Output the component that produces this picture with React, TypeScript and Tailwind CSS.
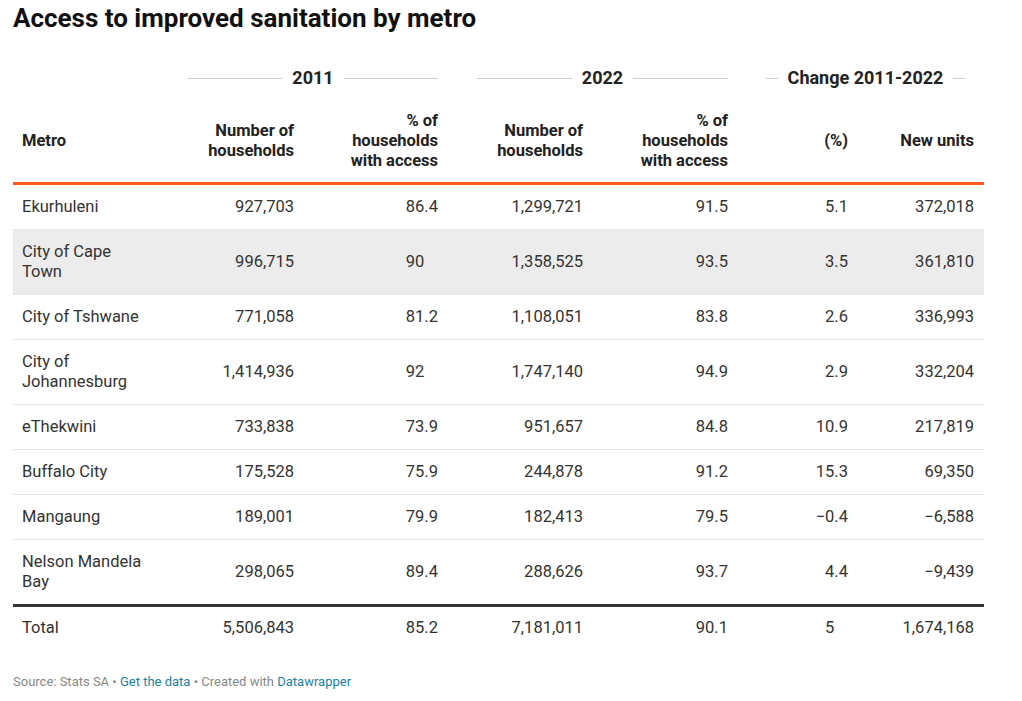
import React from "react";

type Row = { name: React.ReactNode; vals: string[]; shaded?: boolean };

const rows: Row[] = [
  { name: "Ekurhuleni", vals: ["927,703", "86.4", "1,299,721", "91.5", "5.1", "372,018"] },
  { name: <>City of Cape<br />Town</>, vals: ["996,715", "90", "1,358,525", "93.5", "3.5", "361,810"], shaded: true },
  { name: "City of Tshwane", vals: ["771,058", "81.2", "1,108,051", "83.8", "2.6", "336,993"] },
  { name: <>City of<br />Johannesburg</>, vals: ["1,414,936", "92", "1,747,140", "94.9", "2.9", "332,204"] },
  { name: "eThekwini", vals: ["733,838", "73.9", "951,657", "84.8", "10.9", "217,819"] },
  { name: "Buffalo City", vals: ["175,528", "75.9", "244,878", "91.2", "15.3", "69,350"] },
  { name: "Mangaung", vals: ["189,001", "79.9", "182,413", "79.5", "−0.4", "−6,588"] },
  { name: <>Nelson Mandela<br />Bay</>, vals: ["298,065", "89.4", "288,626", "93.7", "4.4", "−9,439"] },
];

const decimalCols = [1, 3, 4];

const grid = "grid grid-cols-[165px_126px_144px_145px_145px_120px_126px]";

function Num({ v, col }: { v: string; col: number }) {
  const pad = decimalCols.includes(col) && !v.includes(".");
  return (
    <div className="pr-[10px] text-right">
      {v}
      {pad ? <span className="invisible">.0</span> : null}
    </div>
  );
}

function GroupLabel({ label }: { label: string }) {
  return (
    <div className="flex items-center">
      <div className="h-px flex-1 bg-[#cccccc]" />
      <span className="px-[10px] text-[18px] font-bold leading-[20px] text-[#222]">{label}</span>
      <div className="h-px flex-1 bg-[#cccccc]" />
    </div>
  );
}

export default function App() {
  return (
    <div
      className="w-[1022px] h-[701px] bg-white text-[#333] overflow-hidden"
      style={{ fontFamily: "Roboto, 'Liberation Sans', sans-serif" }}
    >
      <div className="ml-[13px] w-[971px]">
        <h1 className="mt-[4px] text-[26px] font-bold leading-[28px] text-[#111]">
          Access to improved sanitation by metro
        </h1>

        <div className={`${grid} mt-[36px] h-[20px]`}>
          <div />
          <div className="col-span-2 ml-[10px] mr-[10px]">
            <GroupLabel label="2011" />
          </div>
          <div className="col-span-2 ml-[29px] mr-[10px]">
            <GroupLabel label="2022" />
          </div>
          <div className="col-span-2 ml-[28px] mr-[19px]">
            <GroupLabel label="Change 2011-2022" />
          </div>
        </div>

        <div className={`${grid} mt-[12px] h-[85px] items-center border-b-[3px] border-[#f95a1e] text-[16.5px] font-bold leading-[20px] text-[#222]`}>
          <div className="pl-[9px]">Metro</div>
          <div className="pr-[10px] text-right">Number of<br />households</div>
          <div className="pr-[10px] text-right">% of<br />households<br />with access</div>
          <div className="pr-[10px] text-right">Number of<br />households</div>
          <div className="pr-[10px] text-right">% of<br />households<br />with access</div>
          <div className="pr-[10px] text-right">(%)</div>
          <div className="pr-[10px] text-right">New units</div>
        </div>

        {rows.map((r, i) => {
          const last = i === rows.length - 1;
          return (
            <div
              key={i}
              className={`${grid} items-center text-[16.5px] leading-[20px] ${r.shaded ? "bg-[#ececec]" : ""} ${last ? "" : "border-b border-[#e6e6e6]"}`}
            >
              <div className="pl-[9px] py-[12px]">{r.name}</div>
              {r.vals.map((v, j) => (
                <Num key={j} v={v} col={j} />
              ))}
            </div>
          );
        })}

        <div className={`${grid} h-[44px] items-center border-t-[3px] border-[#333] text-[16.5px] leading-[20px]`}>
          <div className="pl-[9px]">Total</div>
          {["5,506,843", "85.2", "7,181,011", "90.1", "5", "1,674,168"].map((v, j) => (
            <Num key={j} v={v} col={j} />
          ))}
        </div>

        <div className="mt-[26px] text-[13px] leading-[16px] text-[#888]">
          Source: Stats SA • <span className="text-[#1d81a2]">Get the data</span> • Created with{" "}
          <span className="text-[#1d81a2]">Datawrapper</span>
        </div>
      </div>
    </div>
  );
}
